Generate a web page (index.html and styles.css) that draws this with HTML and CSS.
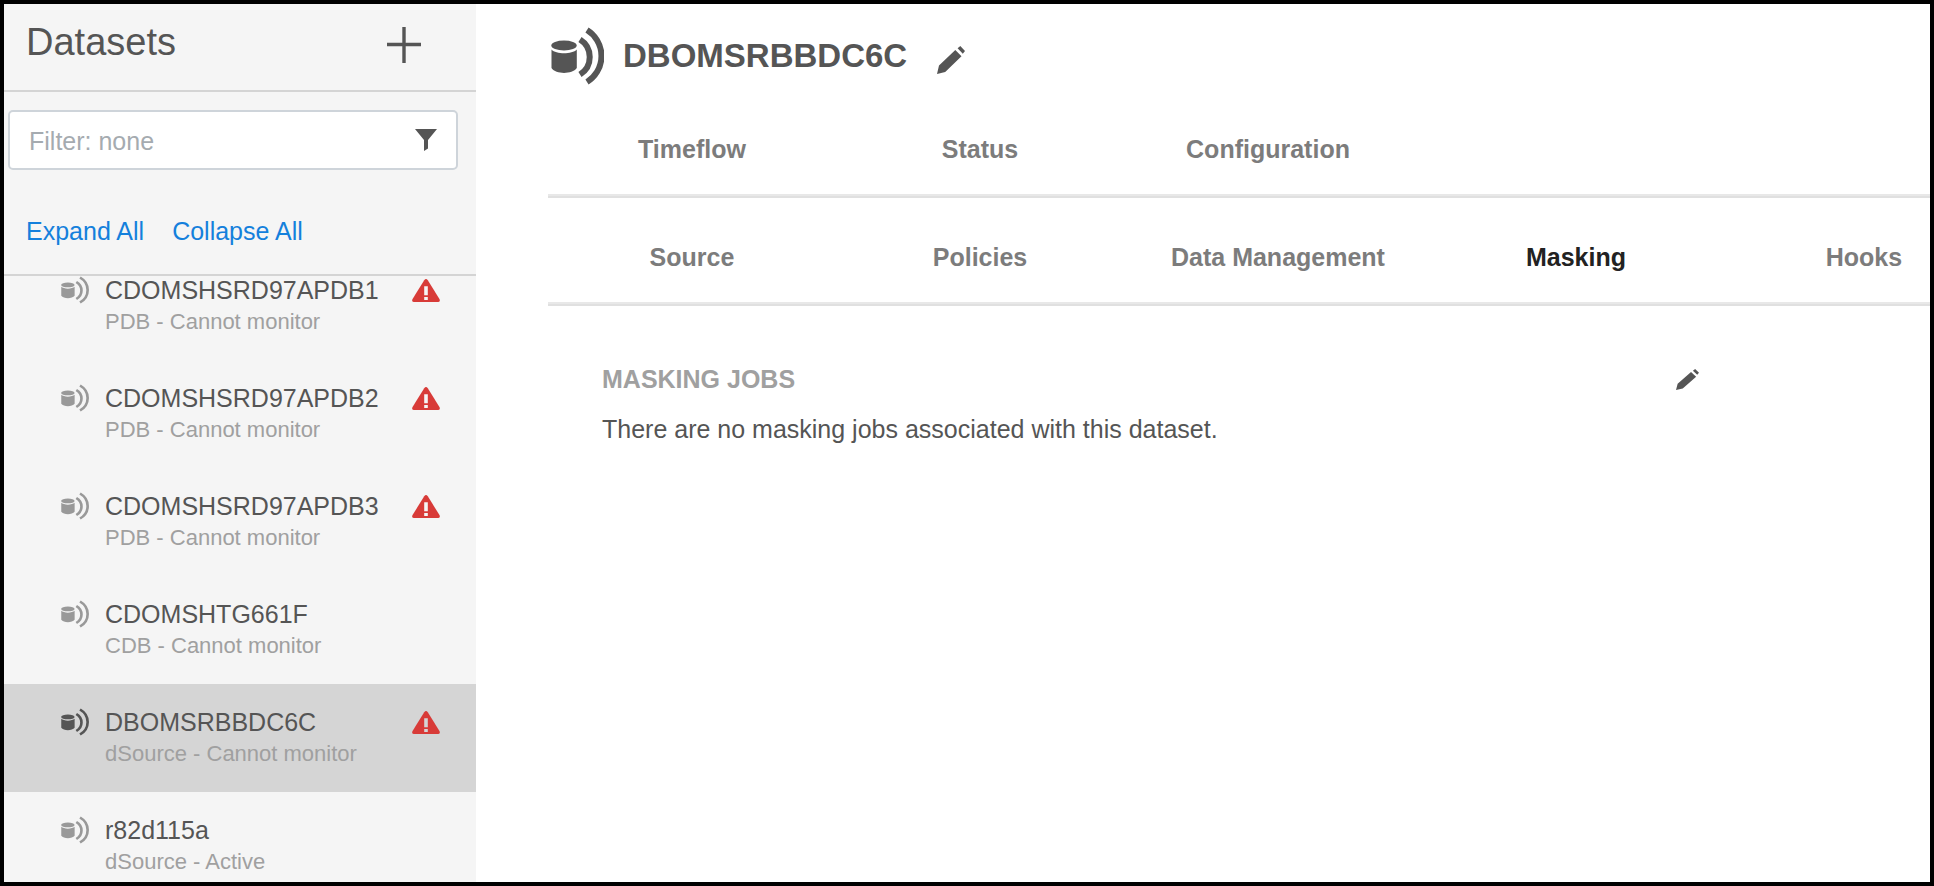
FILE: index.html
```html
<!DOCTYPE html>
<html lang="en">
<head>
  <meta charset="UTF-8">
  <meta name="viewport" content="width=device-width, initial-scale=1.0">
  <title>Datasets</title>
  <link rel="stylesheet" href="styles.css">
</head>
<body>
  <!-- Shared icons -->
  <svg class="sprite" aria-hidden="true">
    <symbol id="icon-dsource" viewBox="0 0 53 58" preserveAspectRatio="none">
      <ellipse cx="13" cy="18.5" rx="12.7" ry="5" fill="currentColor"/>
      <path d="M.5 22.5C5 27.5 21 27.5 25.8 22.5V41C21 47.5 5 47.5 .5 41z" fill="currentColor"/>
      <path d="M29 12.5A20.6 20.6 0 0 1 29 47.5M36 3A30.6 30.6 0 0 1 36 55" fill="none" stroke="currentColor"/>
    </symbol>
    <symbol id="icon-pencil" viewBox="0 0 28 28" preserveAspectRatio="none">
      <path d="M0 28L2 19.5 18.3 4 24.5 10.3 8.2 26zM20.6 2.3L23.3 0 28 5 25.8 7.7z" fill="currentColor"/>
    </symbol>
    <symbol id="icon-warning" viewBox="0 0 28 23">
      <path d="M12.2 1.2Q14-1 15.8 1.2L27.6 20.3Q28.4 23 26 23H2Q-.4 23 .4 20.3z" fill="#d83b38"/>
      <path d="M12.2 7.2h3.6v9h-3.6zM12.2 18h3.6v3h-3.6z" fill="currentColor"/>
    </symbol>
  </svg>

  <aside class="sidebar">
    <header class="sidebar-header">
      <h1>Datasets</h1>
      <button class="icon-button" aria-label="Add dataset">
        <svg class="plus-icon" viewBox="0 0 34 36"><path d="M17 0V36M0 17.5H34" stroke="currentColor" stroke-width="3.4"/></svg>
      </button>
    </header>
    <div class="sidebar-tools">
      <div class="filter-box">
        <input type="text" placeholder="Filter: none" aria-label="Filter datasets">
        <button class="icon-button" aria-label="Filter options">
          <svg class="funnel-icon" viewBox="0 0 22 22"><path d="M0 0H22L13 11V19.5L9 22V11z" fill="currentColor"/></svg>
        </button>
      </div>
      <div class="tree-links">
        <a href="#">Expand All</a>
        <a href="#">Collapse All</a>
      </div>
    </div>
    <div class="dataset-scroll">
      <ul class="dataset-list">
        <li class="dataset">
          <svg class="dsource-icon"><use href="#icon-dsource"/></svg>
          <div class="dataset-text"><div class="name">CDOMSHSRD97APDB1</div><div class="status">PDB - Cannot monitor</div></div>
          <svg class="warning-icon"><use href="#icon-warning"/></svg>
        </li>
        <li class="dataset">
          <svg class="dsource-icon"><use href="#icon-dsource"/></svg>
          <div class="dataset-text"><div class="name">CDOMSHSRD97APDB2</div><div class="status">PDB - Cannot monitor</div></div>
          <svg class="warning-icon"><use href="#icon-warning"/></svg>
        </li>
        <li class="dataset">
          <svg class="dsource-icon"><use href="#icon-dsource"/></svg>
          <div class="dataset-text"><div class="name">CDOMSHSRD97APDB3</div><div class="status">PDB - Cannot monitor</div></div>
          <svg class="warning-icon"><use href="#icon-warning"/></svg>
        </li>
        <li class="dataset">
          <svg class="dsource-icon"><use href="#icon-dsource"/></svg>
          <div class="dataset-text"><div class="name">CDOMSHTG661F</div><div class="status">CDB - Cannot monitor</div></div>
        </li>
        <li class="dataset selected">
          <svg class="dsource-icon"><use href="#icon-dsource"/></svg>
          <div class="dataset-text"><div class="name">DBOMSRBBDC6C</div><div class="status">dSource - Cannot monitor</div></div>
          <svg class="warning-icon"><use href="#icon-warning"/></svg>
        </li>
        <li class="dataset">
          <svg class="dsource-icon"><use href="#icon-dsource"/></svg>
          <div class="dataset-text"><div class="name">r82d115a</div><div class="status">dSource - Active</div></div>
        </li>
      </ul>
    </div>
  </aside>

  <main class="content">
    <header class="content-header">
      <svg class="title-icon"><use href="#icon-dsource"/></svg>
      <h2>DBOMSRBBDC6C</h2>
      <button class="icon-button" aria-label="Rename dataset">
        <svg class="pencil-icon"><use href="#icon-pencil"/></svg>
      </button>
    </header>
    <nav class="tabs">
      <a href="#">Timeflow</a>
      <a href="#">Status</a>
      <a href="#">Configuration</a>
    </nav>
    <nav class="tabs">
      <a href="#">Source</a>
      <a href="#">Policies</a>
      <a href="#">Data Management</a>
      <a href="#" class="active">Masking</a>
      <a href="#">Hooks</a>
    </nav>
    <section class="panel">
      <div class="panel-header">
        <h3>MASKING JOBS</h3>
        <button class="icon-button" aria-label="Edit masking jobs">
          <svg class="pencil-icon small"><use href="#icon-pencil"/></svg>
        </button>
      </div>
      <p>There are no masking jobs associated with this dataset.</p>
    </section>
  </main>
</body>
</html>
```

FILE: styles.css
```css
* {
  box-sizing: border-box;
}
body {
  display: flex;
  height: 100vh;
  margin: 0;
  border: 4px solid #000;
  overflow: hidden;
  background: #fff;
  color: #555;
  font-family: "Liberation Sans", Arial, sans-serif;
  font-size: 25px;
  line-height: 32px;
}
h1, h2, h3, p, ul {
  margin: 0;
  padding: 0;
}
a {
  text-decoration: none;
}
svg {
  display: block;
  flex: none;
}
.sprite {
  display: none;
}
.icon-button {
  padding: 0;
  border: none;
  background: none;
  color: #555;
  cursor: pointer;
}

/* Sidebar */
.sidebar {
  display: flex;
  flex-direction: column;
  flex: 0 0 472px;
  background: #f5f5f5;
}
.sidebar-header {
  display: flex;
  justify-content: space-between;
  align-items: flex-start;
  height: 88px;
  padding: 16px 55px 0 22px;
  border-bottom: 2px solid #d4d4d4;
}
.sidebar-header h1 {
  font-size: 38px;
  font-weight: normal;
  line-height: 44px;
}
.plus-icon {
  width: 34px;
  height: 36px;
  margin-top: 7px;
}
.sidebar-tools {
  padding: 18px 18px 27px 4px;
  border-bottom: 2px solid #d4d4d4;
}
.filter-box {
  display: flex;
  align-items: center;
  height: 60px;
  padding: 0 19px;
  border: 2px solid #ced4da;
  border-radius: 5px;
  background: #fff;
}
.filter-box input {
  flex: 1;
  min-width: 0;
  padding: 2px 0 0;
  border: none;
  outline: none;
  background: none;
  color: #555;
  font: inherit;
}
.filter-box input::placeholder {
  color: #a5abb0;
}
.funnel-icon {
  width: 22px;
  height: 22px;
}
.tree-links {
  display: flex;
  gap: 28px;
  margin-top: 45px;
  padding-left: 18px;
}
.tree-links a {
  color: #1480dc;
}
.dataset-scroll {
  flex: 1;
  min-height: 0;
  overflow: hidden;
}
.dataset-list {
  margin-top: -24px;
  list-style: none;
}
.dataset {
  display: flex;
  align-items: flex-start;
  height: 108px;
  padding: 22px 36px 0 57px;
  color: #f5f5f5;
}
.dataset.selected {
  background: #d5d5d5;
  color: #d5d5d5;
}
.dsource-icon {
  width: 28px;
  height: 28px;
  margin-top: 2px;
  color: #999;
  stroke-width: 5;
}
.selected .dsource-icon {
  color: #555;
}
.dataset-text {
  flex: 1;
  padding-left: 16px;
}
.name {
  color: #555;
}
.status {
  color: #a0a0a0;
  font-size: 22px;
}
.warning-icon {
  width: 28px;
  height: 23px;
  margin-top: 5px;
}

/* Main area */
.content {
  flex: 1;
  min-width: 0;
  padding-left: 72px;
  overflow: hidden;
}
.content-header {
  display: flex;
  align-items: center;
  height: 86px;
  padding: 17px 0 0 3px;
}
.title-icon {
  width: 53px;
  height: 58px;
  stroke-width: 6;
}
.content-header h2 {
  margin: 0 30px 0 19px;
  font-size: 33px;
}
.pencil-icon {
  width: 28px;
  height: 28px;
}
.content-header .pencil-icon {
  margin-top: 8px;
}
.pencil-icon.small {
  width: 23px;
  height: 21px;
}
.tabs {
  display: flex;
  height: 108px;
  border-bottom: 2px solid #e0e0e0;
  box-shadow: inset 0 -2px #e8e8e8;
}
.tabs a {
  flex: none;
  min-width: 288px;
  padding: 43px 47px 0;
  color: #7c7c7c;
  font-weight: bold;
  text-align: center;
}
.tabs a.active {
  color: #222;
}
.panel {
  max-width: 1205px;
  padding: 57px 54px;
}
.panel-header {
  display: flex;
  justify-content: space-between;
  align-items: center;
  margin-bottom: 18px;
}
.panel-header h3 {
  color: #a0a0a0;
  font-size: 25px;
}
```
